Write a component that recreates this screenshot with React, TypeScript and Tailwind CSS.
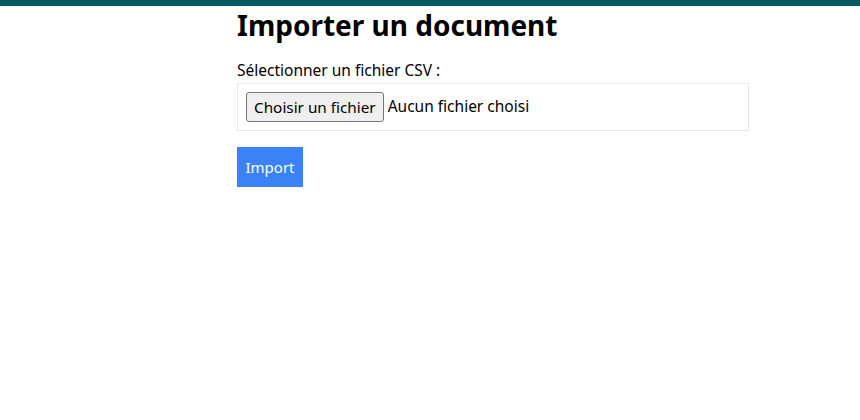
export default function App() {
  return (
    <div className="min-h-screen bg-white" style={{ fontFamily: '"Noto Sans", "Open Sans", sans-serif' }}>
      <div className="h-[6px] bg-[#065a60]" />
      <div className="pl-[237px]">
        <div className="w-[512px]">
          <h1 className="text-[28px] font-bold leading-[38px] text-black">Importer un document</h1>
          <form className="mt-[15px]">
            <label className="block text-[15.5px] leading-[22px] text-black">Sélectionner un fichier CSV :</label>
            <div className="mt-[2px] flex h-[48px] items-center border border-[#e5e7eb] px-[8px]">
              <span className="flex h-[30px] items-center rounded-[3px] border border-[#767676] bg-[#efefef] px-[7px] text-[15.3px] text-black">
                Choisir un fichier
              </span>
              <span className="ml-[4px] text-[15.5px] text-black">Aucun fichier choisi</span>
            </div>
            <button type="button" className="mt-[16px] flex h-[40px] items-center bg-[#3b82f6] px-[8.5px] text-[15px] text-white">
              Import
            </button>
          </form>
        </div>
      </div>
    </div>
  );
}
